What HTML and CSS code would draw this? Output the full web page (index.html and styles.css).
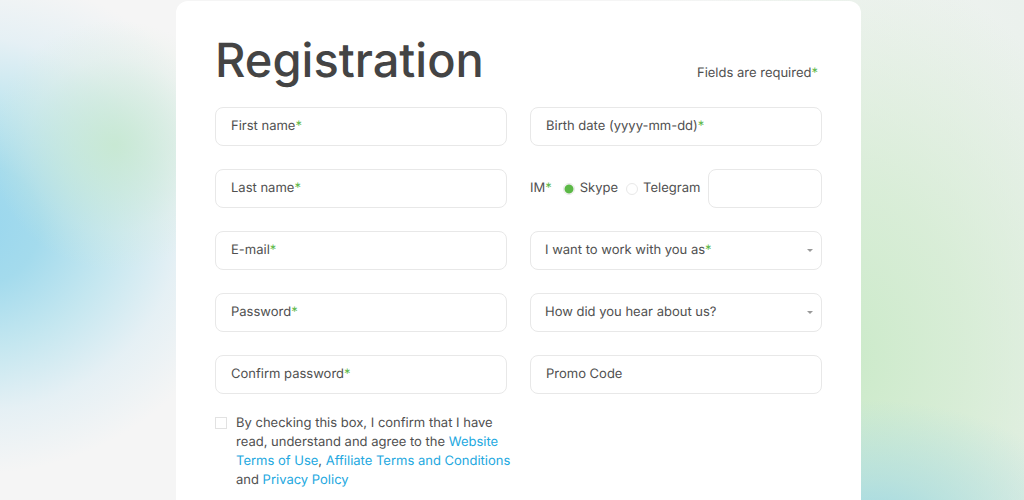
FILE: index.html
```html
<!DOCTYPE html>
<html lang="en">

<head>
    <meta charset="UTF-8">
    <meta name="viewport" content="width=device-width, initial-scale=1.0">
    <title>Registration</title>
    <link rel="stylesheet" href="styles.css">
</head>

<body>

    <main class="card">
        <!-- Heading -->
        <div class="card-header">
            <h1>Registration</h1>
            <p>Fields are required<span class="star">*</span></p>
        </div>

        <!-- Form -->
        <form class="form">
            <div class="column">
                <div class="field">
                    <input type="text" id="firstName" placeholder=" " required>
                    <label for="firstName">First name<span class="star">*</span></label>
                </div>
                <div class="field">
                    <input type="text" id="lastName" placeholder=" " required>
                    <label for="lastName">Last name<span class="star">*</span></label>
                </div>
                <div class="field">
                    <input type="email" id="email" placeholder=" " required>
                    <label for="email">E-mail<span class="star">*</span></label>
                </div>
                <div class="field">
                    <input type="password" id="password" placeholder=" " required>
                    <label for="password">Password<span class="star">*</span></label>
                </div>
                <div class="field">
                    <input type="password" id="confirmPassword" placeholder=" " required>
                    <label for="confirmPassword">Confirm password<span class="star">*</span></label>
                </div>
                <div class="agree">
                    <input type="checkbox" id="agree">
                    <label for="agree">By checking this box, I confirm that I have read, understand and agree to the
                        <a href="#">Website Terms of Use</a>, <a href="#">Affiliate Terms and Conditions</a> and
                        <a href="#">Privacy Policy</a></label>
                </div>
            </div>

            <div class="column">
                <div class="field">
                    <input type="text" id="birthDate" placeholder=" " required>
                    <label for="birthDate">Birth date (yyyy-mm-dd)<span class="star">*</span></label>
                </div>
                <div class="im">
                    <label class="im-title" for="imName">IM<span class="star">*</span></label>
                    <input type="radio" name="im" id="skype" checked>
                    <label class="im-option" for="skype">Skype</label>
                    <input type="radio" name="im" id="telegram">
                    <label class="im-option" for="telegram">Telegram</label>
                    <input type="text" id="imName">
                </div>
                <div class="field select">
                    <select id="workAs" required>
                        <option value="" hidden></option>
                        <option>Advertiser</option>
                        <option>Publisher</option>
                    </select>
                    <label for="workAs">I want to work with you as<span class="star">*</span></label>
                </div>
                <div class="field select">
                    <select id="hearAbout" required>
                        <option value="" hidden></option>
                        <option>Search</option>
                        <option>Friends</option>
                    </select>
                    <label for="hearAbout">How did you hear about us?</label>
                </div>
                <div class="field">
                    <input type="text" id="promoCode" placeholder=" ">
                    <label for="promoCode">Promo Code</label>
                </div>
            </div>
        </form>
    </main>

</body>

</html>
```
FILE: styles.css
```css
* {
    margin: 0;
    padding: 0;
    box-sizing: border-box;
}

body {
    font-family: Inter, Arial, sans-serif;
    font-size: 13px;
    line-height: 19px;
    text-rendering: geometricPrecision;
    color: #505050;
    min-height: 100vh;
    padding: 1px 163px 0 176px;
    background-color: #f5f5f5;
    background-image:
        radial-gradient(ellipse 125px 125px at 115px 145px, rgba(198, 232, 206, 0.85), rgba(202, 233, 212, 0.6) 35%, rgba(215, 236, 218, 0.25) 70%, rgba(225, 240, 228, 0) 100%),
        radial-gradient(ellipse 280px 250px at -30px 225px, #98d6ee, rgba(155, 216, 236, 0.9) 25%, rgba(180, 226, 238, 0.75) 50%, rgba(210, 234, 244, 0.45) 75%, rgba(225, 240, 246, 0) 100%),
        radial-gradient(ellipse 220px 130px at 870px 530px, #a0d8e4, rgba(165, 218, 226, 0.6) 40%, rgba(180, 224, 228, 0) 100%),
        radial-gradient(ellipse 300px 400px at 840px 360px, #cbeac9, rgba(212, 236, 210, 0.8) 45%, rgba(225, 240, 225, 0) 100%),
        linear-gradient(90deg, rgba(236, 242, 236, 0) 60%, #ebf1ed 100%);
    background-repeat: no-repeat;
}

/* Card */
.card {
    background-color: white;
    border-radius: 12px 12px 0 0;
    padding: 35px 39px 0;
    min-height: calc(100vh - 1px);
}

.card-header {
    display: flex;
    justify-content: space-between;
    align-items: flex-end;
    padding-right: 4px;
    margin-bottom: 22px;
}

.card-header h1 {
    font-size: 47px;
    line-height: 49px;
    font-weight: 500;
    color: #444;
}

.card-header p {
    padding-bottom: 2px;
}

.star {
    color: #5cb847;
}

/* Form */
.form {
    display: grid;
    grid-template-columns: repeat(2, minmax(0, 1fr));
    column-gap: 23px;
}

.column {
    display: flex;
    flex-direction: column;
    gap: 23px;
}

.field {
    position: relative;
}

.field label {
    position: absolute;
    left: 16px;
    top: 10px;
    pointer-events: none;
}

.field.select label {
    left: 15px;
}

input[type="text"],
input[type="email"],
input[type="password"],
select {
    display: block;
    width: 100%;
    height: 39px;
    padding: 0 15px;
    font: inherit;
    color: inherit;
    background-color: white;
    border: 1px solid #e8e8e8;
    border-radius: 8px;
    appearance: none;
}

.field input:not(:placeholder-shown) + label,
.field select:valid + label {
    display: none;
}

/* Dropdown arrow */
.select::after {
    content: "";
    position: absolute;
    right: 9px;
    top: 18px;
    border: 3px solid transparent;
    border-top-color: #999;
    border-bottom: none;
    pointer-events: none;
}

/* Messenger */
.im {
    display: flex;
    align-items: center;
}

.im-title {
    margin-right: 11px;
}

.im-option {
    margin: 0 8px 0 5px;
}

.im input[type="text"] {
    flex: 1;
    width: auto;
    min-width: 0;
}

input[type="radio"] {
    appearance: none;
    width: 12px;
    height: 12px;
    border: 1px solid #e8e8e8;
    border-radius: 50%;
}

input[type="radio"]:checked {
    background: radial-gradient(circle, #5cb847 4px, white 5px);
}

/* Agreement */
.agree {
    display: flex;
    align-items: flex-start;
    gap: 9px;
    margin: -3px -8px 0 0;
}

.agree input {
    appearance: none;
    flex: none;
    width: 12px;
    height: 12px;
    margin-top: 3px;
    border: 1px solid #e2e2e2;
}

.agree input:checked {
    background-color: #5cb847;
}

.agree a {
    color: #23a8e0;
    text-decoration: none;
}
```
